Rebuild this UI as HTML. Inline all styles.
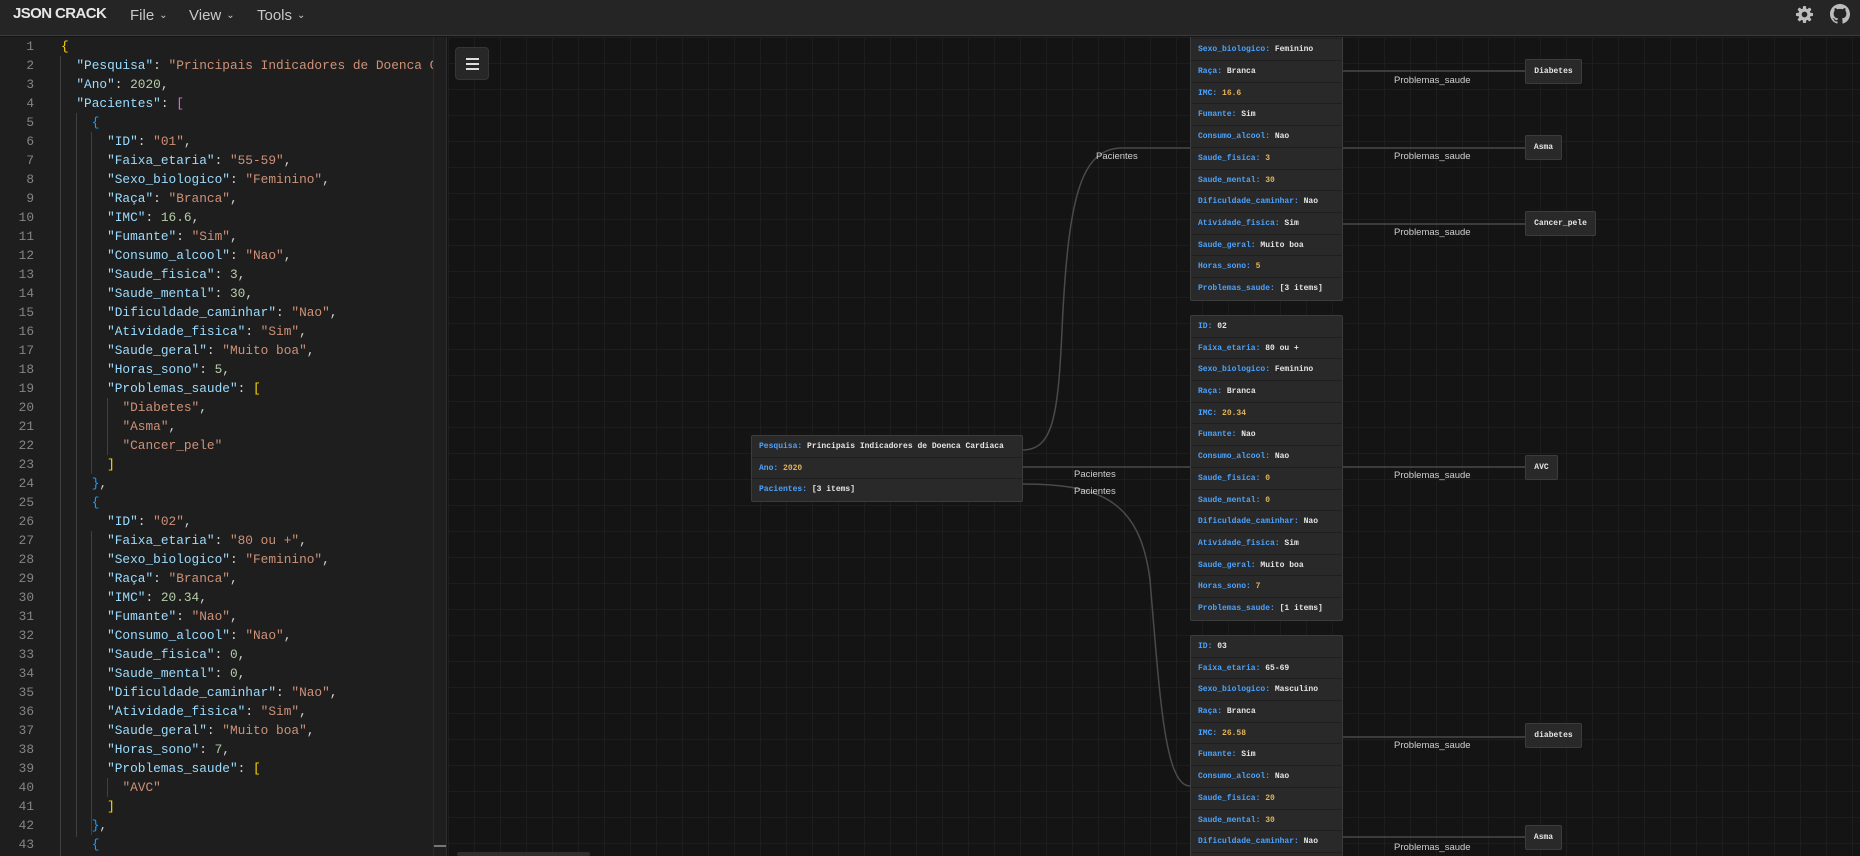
<!DOCTYPE html>
<html><head><meta charset="utf-8"><style>
*{margin:0;padding:0;box-sizing:border-box}
html,body{width:1860px;height:856px;overflow:hidden}
body{background:#141414;font-family:"Liberation Sans",sans-serif;position:relative}
#hdr{position:absolute;left:0;top:0;width:1860px;height:36px;background:#252526;border-bottom:1px solid #3b3b3b}
#hdr .logo{position:absolute;left:13px;top:5px;font-weight:bold;font-size:15px;color:#e6e6e6;letter-spacing:-0.6px}
#hdr .m{position:absolute;top:7px;font-size:15px;color:#c8c8c8}
#hdr .m span{font-size:10px;margin-left:5px;position:relative;top:-2px}
#ed{position:absolute;left:0;top:37px;width:447px;height:819px;background:#1e1e1e;overflow:hidden;border-right:1px solid #2d2d2d}
#code{position:absolute;left:0;top:0;width:433px;height:819px;overflow:hidden;font-family:"Liberation Mono",monospace;font-size:12.8px}
.l{height:19px;line-height:19px;white-space:pre;position:relative}
.n{display:inline-block;width:34px;text-align:right;color:#858585}
.c{position:absolute;left:61px;top:0;color:#d4d4d4}
.k{color:#9cdcfe}.s{color:#ce9178}.d{color:#b5cea8}.g{color:#ffd700}.p{color:#da70d6}.b{color:#179fff}
.gd{position:absolute;width:1px;background:#404040}
#sb{position:absolute;left:433px;top:0;width:14px;height:819px;background:#1e1e1e;border-left:1px solid #2a2a2a}
#gr{position:absolute;left:448px;top:37px;width:1412px;height:819px;background-color:#141414;
background-image:linear-gradient(#1d1d1d 1px,transparent 1px),linear-gradient(90deg,#1d1d1d 1px,transparent 1px);background-size:26px 26px;overflow:hidden}
.node{position:absolute;background:#292929;border:1px solid #3c3c3c;border-radius:2px;font-family:"Liberation Mono",monospace;font-size:8px;font-weight:bold}
.r{height:21.7px;line-height:21.7px;padding-left:7px;border-bottom:1px solid #1f1f1f;color:#e6e6e6;white-space:nowrap}
.r:last-child{border-bottom:none}
.r i{font-style:normal;color:#4ba3ff}
.r u{text-decoration:none;color:#e2b35b}
.leaf{position:absolute;background:#292929;border:1px solid #3c3c3c;border-radius:2px;font-family:"Liberation Mono",monospace;font-size:8px;font-weight:bold;color:#e6e6e6;text-align:center}
.lab{position:absolute;font-size:9.5px;color:#cfcfcf}
#ham{position:absolute;left:7px;top:10px;width:34px;height:33px;background:#272727;border:1px solid #353535;border-radius:4px}
#ham i{position:absolute;left:10px;width:13px;height:1.6px;background:#ddd}
</style></head><body>
<div id="hdr">
<div class="logo">JSON CRACK</div>
<div class="m" style="left:130px">File<span>&#8964;</span></div>
<div class="m" style="left:189px">View<span>&#8964;</span></div>
<div class="m" style="left:257px">Tools<span>&#8964;</span></div>
<svg style="position:absolute;left:1795px;top:5px" width="19" height="19" viewBox="0 0 20 20"><g fill="#bdbdbd"><circle cx="10" cy="10" r="6.5"/><g><rect x="8.3" y="1" width="3.4" height="18" rx="1"/><rect x="8.3" y="1" width="3.4" height="18" rx="1" transform="rotate(45 10 10)"/><rect x="8.3" y="1" width="3.4" height="18" rx="1" transform="rotate(90 10 10)"/><rect x="8.3" y="1" width="3.4" height="18" rx="1" transform="rotate(135 10 10)"/></g></g><circle cx="10" cy="10" r="3" fill="#252526"/></svg>
<svg style="position:absolute;left:1830px;top:4px" width="20" height="20" viewBox="0 0 16 16"><path fill="#bdbdbd" d="M8 0C3.58 0 0 3.58 0 8c0 3.54 2.29 6.53 5.47 7.59.4.07.55-.17.55-.38v-1.33c-2.23.48-2.7-1.07-2.7-1.07-.36-.92-.89-1.17-.89-1.17-.73-.5.05-.49.05-.49.8.06 1.23.83 1.23.83.71 1.23 1.87.87 2.33.67.07-.52.28-.87.5-1.07-1.78-.2-3.64-.89-3.64-3.95 0-.87.31-1.59.83-2.15-.08-.2-.36-1.02.08-2.12 0 0 .67-.21 2.2.82a7.6 7.6 0 0 1 4 0c1.53-1.04 2.2-.82 2.2-.82.44 1.1.16 1.92.08 2.12.51.56.82 1.27.82 2.15 0 3.07-1.87 3.75-3.65 3.95.29.25.54.73.54 1.48v2.2c0 .21.15.46.55.38A8 8 0 0 0 16 8c0-4.42-3.58-8-8-8z"/></svg>
</div>

<div id="ed"><div id="code">
<div class="gd" style="left:60px;top:19px;height:800px"></div>
<div class="gd" style="left:76px;top:76px;height:724px"></div>
<div class="gd" style="left:91px;top:95px;height:342px"></div>
<div class="gd" style="left:91px;top:494px;height:304px"></div>
<div class="gd" style="left:107px;top:361px;height:57px"></div>
<div class="gd" style="left:107px;top:741px;height:19px"></div>
<div class="l"><span class="n">1</span><span class="c"><span class="g">{</span></span></div>
<div class="l"><span class="n">2</span><span class="c">  <span class="k">"Pesquisa"</span>: <span class="s">"Principais Indicadores de Doenca Cardiaca"</span>,</span></div>
<div class="l"><span class="n">3</span><span class="c">  <span class="k">"Ano"</span>: <span class="d">2020</span>,</span></div>
<div class="l"><span class="n">4</span><span class="c">  <span class="k">"Pacientes"</span>: <span class="p">[</span></span></div>
<div class="l"><span class="n">5</span><span class="c">    <span class="b">{</span></span></div>
<div class="l"><span class="n">6</span><span class="c">      <span class="k">"ID"</span>: <span class="s">"01"</span>,</span></div>
<div class="l"><span class="n">7</span><span class="c">      <span class="k">"Faixa_etaria"</span>: <span class="s">"55-59"</span>,</span></div>
<div class="l"><span class="n">8</span><span class="c">      <span class="k">"Sexo_biologico"</span>: <span class="s">"Feminino"</span>,</span></div>
<div class="l"><span class="n">9</span><span class="c">      <span class="k">"Raça"</span>: <span class="s">"Branca"</span>,</span></div>
<div class="l"><span class="n">10</span><span class="c">      <span class="k">"IMC"</span>: <span class="d">16.6</span>,</span></div>
<div class="l"><span class="n">11</span><span class="c">      <span class="k">"Fumante"</span>: <span class="s">"Sim"</span>,</span></div>
<div class="l"><span class="n">12</span><span class="c">      <span class="k">"Consumo_alcool"</span>: <span class="s">"Nao"</span>,</span></div>
<div class="l"><span class="n">13</span><span class="c">      <span class="k">"Saude_fisica"</span>: <span class="d">3</span>,</span></div>
<div class="l"><span class="n">14</span><span class="c">      <span class="k">"Saude_mental"</span>: <span class="d">30</span>,</span></div>
<div class="l"><span class="n">15</span><span class="c">      <span class="k">"Dificuldade_caminhar"</span>: <span class="s">"Nao"</span>,</span></div>
<div class="l"><span class="n">16</span><span class="c">      <span class="k">"Atividade_fisica"</span>: <span class="s">"Sim"</span>,</span></div>
<div class="l"><span class="n">17</span><span class="c">      <span class="k">"Saude_geral"</span>: <span class="s">"Muito boa"</span>,</span></div>
<div class="l"><span class="n">18</span><span class="c">      <span class="k">"Horas_sono"</span>: <span class="d">5</span>,</span></div>
<div class="l"><span class="n">19</span><span class="c">      <span class="k">"Problemas_saude"</span>: <span class="g">[</span></span></div>
<div class="l"><span class="n">20</span><span class="c">        <span class="s">"Diabetes"</span>,</span></div>
<div class="l"><span class="n">21</span><span class="c">        <span class="s">"Asma"</span>,</span></div>
<div class="l"><span class="n">22</span><span class="c">        <span class="s">"Cancer_pele"</span></span></div>
<div class="l"><span class="n">23</span><span class="c">      <span class="g">]</span></span></div>
<div class="l"><span class="n">24</span><span class="c">    <span class="b">}</span>,</span></div>
<div class="l"><span class="n">25</span><span class="c">    <span class="b">{</span></span></div>
<div class="l"><span class="n">26</span><span class="c">      <span class="k">"ID"</span>: <span class="s">"02"</span>,</span></div>
<div class="l"><span class="n">27</span><span class="c">      <span class="k">"Faixa_etaria"</span>: <span class="s">"80 ou +"</span>,</span></div>
<div class="l"><span class="n">28</span><span class="c">      <span class="k">"Sexo_biologico"</span>: <span class="s">"Feminino"</span>,</span></div>
<div class="l"><span class="n">29</span><span class="c">      <span class="k">"Raça"</span>: <span class="s">"Branca"</span>,</span></div>
<div class="l"><span class="n">30</span><span class="c">      <span class="k">"IMC"</span>: <span class="d">20.34</span>,</span></div>
<div class="l"><span class="n">31</span><span class="c">      <span class="k">"Fumante"</span>: <span class="s">"Nao"</span>,</span></div>
<div class="l"><span class="n">32</span><span class="c">      <span class="k">"Consumo_alcool"</span>: <span class="s">"Nao"</span>,</span></div>
<div class="l"><span class="n">33</span><span class="c">      <span class="k">"Saude_fisica"</span>: <span class="d">0</span>,</span></div>
<div class="l"><span class="n">34</span><span class="c">      <span class="k">"Saude_mental"</span>: <span class="d">0</span>,</span></div>
<div class="l"><span class="n">35</span><span class="c">      <span class="k">"Dificuldade_caminhar"</span>: <span class="s">"Nao"</span>,</span></div>
<div class="l"><span class="n">36</span><span class="c">      <span class="k">"Atividade_fisica"</span>: <span class="s">"Sim"</span>,</span></div>
<div class="l"><span class="n">37</span><span class="c">      <span class="k">"Saude_geral"</span>: <span class="s">"Muito boa"</span>,</span></div>
<div class="l"><span class="n">38</span><span class="c">      <span class="k">"Horas_sono"</span>: <span class="d">7</span>,</span></div>
<div class="l"><span class="n">39</span><span class="c">      <span class="k">"Problemas_saude"</span>: <span class="g">[</span></span></div>
<div class="l"><span class="n">40</span><span class="c">        <span class="s">"AVC"</span></span></div>
<div class="l"><span class="n">41</span><span class="c">      <span class="g">]</span></span></div>
<div class="l"><span class="n">42</span><span class="c">    <span class="b">}</span>,</span></div>
<div class="l"><span class="n">43</span><span class="c">    <span class="b">{</span></span></div>
</div>
<div id="sb"><div style="position:absolute;left:0;top:808px;width:13px;height:2px;background:#777"></div></div>
</div>

<div id="gr">
<svg style="position:absolute;left:0;top:0" width="1412" height="819" viewBox="448 37 1412 819">
<g fill="none" stroke="#4a4a4a" stroke-width="1.5">
<path d="M1022,450 C1052,450 1058,420 1062,330 C1068,200 1080,150 1120,148 L1190,148"/>
<path d="M1022,467 L1190,467"/>
<path d="M1022,484 C1100,484 1140,500 1150,580 C1160,700 1165,786 1190,786"/>
<path d="M1342,71 L1525,71"/>
<path d="M1342,148 L1525,148"/>
<path d="M1342,224 L1525,224"/>
<path d="M1342,467 L1525,467"/>
<path d="M1342,737 L1525,737"/>
<path d="M1342,837 L1525,837"/>
</g></svg>
<div id="ham"><i style="top:10px"></i><i style="top:15px"></i><i style="top:20px"></i></div>
<div class="lab" style="left:648px;top:114px">Pacientes</div>
<div class="lab" style="left:626px;top:432px">Pacientes</div>
<div class="lab" style="left:626px;top:449px">Pacientes</div>
<div class="lab" style="left:946px;top:38px">Problemas_saude</div>
<div class="lab" style="left:946px;top:114px">Problemas_saude</div>
<div class="lab" style="left:946px;top:190px">Problemas_saude</div>
<div class="lab" style="left:946px;top:433px">Problemas_saude</div>
<div class="lab" style="left:946px;top:703px">Problemas_saude</div>
<div class="lab" style="left:946px;top:805px">Problemas_saude</div>

<div class="node" style="left:303px;top:398px;width:272px">
<div class="r"><i>Pesquisa:</i> Principais Indicadores de Doenca Cardiaca</div>
<div class="r"><i>Ano:</i> <u>2020</u></div>
<div class="r"><i>Pacientes:</i> [3 items]</div>
</div>

<div class="node" style="left:742px;top:-42px;width:153px">
<div class="r"><i>ID:</i> 01</div>
<div class="r"><i>Faixa_etaria:</i> 55-59</div>
<div class="r"><i>Sexo_biologico:</i> Feminino</div>
<div class="r"><i>Raça:</i> Branca</div>
<div class="r"><i>IMC:</i> <u>16.6</u></div>
<div class="r"><i>Fumante:</i> Sim</div>
<div class="r"><i>Consumo_alcool:</i> Nao</div>
<div class="r"><i>Saude_fisica:</i> <u>3</u></div>
<div class="r"><i>Saude_mental:</i> <u>30</u></div>
<div class="r"><i>Dificuldade_caminhar:</i> Nao</div>
<div class="r"><i>Atividade_fisica:</i> Sim</div>
<div class="r"><i>Saude_geral:</i> Muito boa</div>
<div class="r"><i>Horas_sono:</i> <u>5</u></div>
<div class="r"><i>Problemas_saude:</i> [3 items]</div>
</div>

<div class="node" style="left:742px;top:278px;width:153px">
<div class="r"><i>ID:</i> 02</div>
<div class="r"><i>Faixa_etaria:</i> 80 ou +</div>
<div class="r"><i>Sexo_biologico:</i> Feminino</div>
<div class="r"><i>Raça:</i> Branca</div>
<div class="r"><i>IMC:</i> <u>20.34</u></div>
<div class="r"><i>Fumante:</i> Nao</div>
<div class="r"><i>Consumo_alcool:</i> Nao</div>
<div class="r"><i>Saude_fisica:</i> <u>0</u></div>
<div class="r"><i>Saude_mental:</i> <u>0</u></div>
<div class="r"><i>Dificuldade_caminhar:</i> Nao</div>
<div class="r"><i>Atividade_fisica:</i> Sim</div>
<div class="r"><i>Saude_geral:</i> Muito boa</div>
<div class="r"><i>Horas_sono:</i> <u>7</u></div>
<div class="r"><i>Problemas_saude:</i> [1 items]</div>
</div>

<div class="node" style="left:742px;top:598px;width:153px;height:240px">
<div class="r"><i>ID:</i> 03</div>
<div class="r"><i>Faixa_etaria:</i> 65-69</div>
<div class="r"><i>Sexo_biologico:</i> Masculino</div>
<div class="r"><i>Raça:</i> Branca</div>
<div class="r"><i>IMC:</i> <u>26.58</u></div>
<div class="r"><i>Fumante:</i> Sim</div>
<div class="r"><i>Consumo_alcool:</i> Nao</div>
<div class="r"><i>Saude_fisica:</i> <u>20</u></div>
<div class="r"><i>Saude_mental:</i> <u>30</u></div>
<div class="r" style="border-bottom:1px solid #1f1f1f"><i>Dificuldade_caminhar:</i> Nao</div>
</div>

<div class="leaf" style="left:1077px;top:22px;width:57px;height:25px;line-height:23px">Diabetes</div>
<div class="leaf" style="left:1077px;top:98px;width:37px;height:25px;line-height:23px">Asma</div>
<div class="leaf" style="left:1077px;top:174px;width:71px;height:25px;line-height:23px">Cancer_pele</div>
<div class="leaf" style="left:1077px;top:418px;width:33px;height:25px;line-height:23px">AVC</div>
<div class="leaf" style="left:1077px;top:686px;width:57px;height:25px;line-height:23px">diabetes</div>
<div class="leaf" style="left:1077px;top:788px;width:37px;height:25px;line-height:23px">Asma</div>

<div style="position:absolute;left:9px;top:815px;width:133px;height:4px;background:#2e2e2e;border-radius:2px"></div>
</div>
</body></html>
